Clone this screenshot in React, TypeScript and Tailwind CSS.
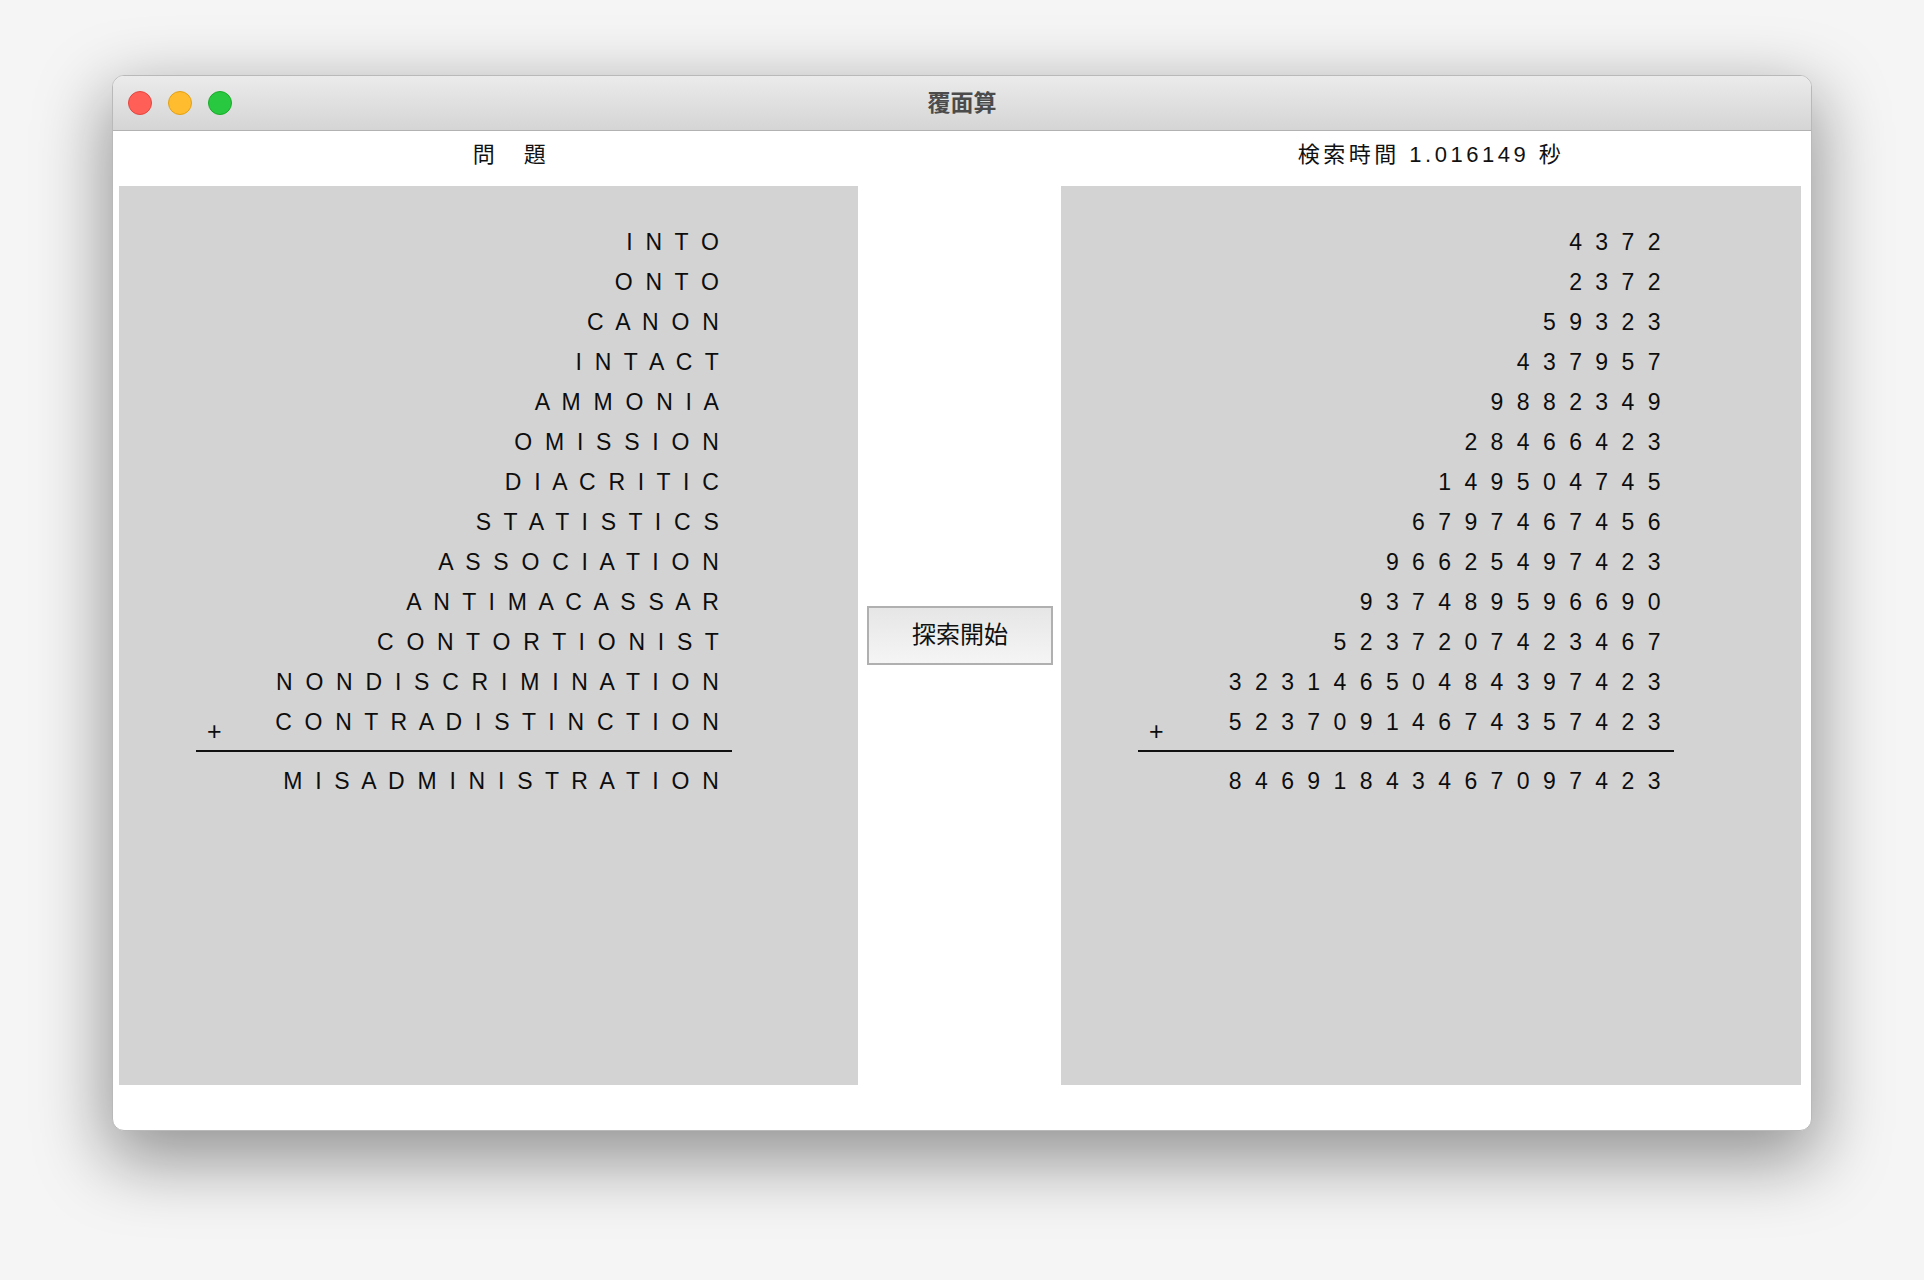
import React from "react";

const spaced = (s: string) => s.split("").join(" ");

const problem = [
  "INTO",
  "ONTO",
  "CANON",
  "INTACT",
  "AMMONIA",
  "OMISSION",
  "DIACRITIC",
  "STATISTICS",
  "ASSOCIATION",
  "ANTIMACASSAR",
  "CONTORTIONIST",
  "NONDISCRIMINATION",
  "CONTRADISTINCTION",
];
const problemResult = "MISADMINISTRATION";

const answer = [
  "4372",
  "2372",
  "59323",
  "437957",
  "9882349",
  "28466423",
  "149504745",
  "6797467456",
  "96625497423",
  "937489596690",
  "5237207423467",
  "32314650484397423",
  "52370914674357423",
];
const answerResult = "84691843467097423";

const FONT = { fontFamily: '"Liberation Sans", Arial, "Noto Sans CJK JP", sans-serif' };

function Sum({ rows, result, digits }: { rows: string[]; result: string; digits?: boolean }) {
  return (
    <div className="h-[899px] bg-[#d3d3d3] pt-[36px]">
      <div
        className={
          "ml-[77px] w-[536px] text-[23px] text-[#0d0d0d] " + (digits ? "tracking-[3.5px]" : "tracking-[3.2px]")
        }
      >
        {rows.map((r, i) =>
          i === rows.length - 1 ? (
            <div key={i} className="flex h-[40px] items-start justify-between pr-[10px] leading-[40px]">
              <span className="mt-[9px] pl-[11px] text-[25px]">+</span>
              <span>{spaced(r)}</span>
            </div>
          ) : (
            <div key={i} className="flex h-[40px] justify-end pr-[10px] leading-[40px]">
              {spaced(r)}
            </div>
          )
        )}
        <div className="mt-[8px] h-[2px] bg-[#111]" />
        <div className="mt-[9px] flex h-[40px] justify-end pr-[10px] leading-[40px]">{spaced(result)}</div>
      </div>
    </div>
  );
}

export default function App() {
  return (
    <div className="h-[1280px] w-[1924px] bg-[#f5f5f5] pl-[112px] pt-[75px]" style={FONT}>
      <div className="flex h-[1056px] w-[1700px] flex-col overflow-hidden rounded-[12px] border border-[#b9b9b9] bg-white shadow-[0_24px_70px_6px_rgba(0,0,0,0.4)]">
        {/* Title bar */}
        <div className="relative flex h-[55px] shrink-0 items-center border-b border-[#b2b2b2] bg-gradient-to-b from-[#ebebeb] to-[#d5d5d5] pl-[15px]">
          <div className="flex gap-[16px]">
            <div className="h-[24px] w-[24px] rounded-full border border-[#e2463f] bg-[#ff5f57]" />
            <div className="h-[24px] w-[24px] rounded-full border border-[#e1a116] bg-[#febc2e]" />
            <div className="h-[24px] w-[24px] rounded-full border border-[#1aab29] bg-[#28c840]" />
          </div>
          <div className="pointer-events-none absolute inset-0 flex items-center justify-center text-[23px] font-bold text-[#4b4b4b]">
            覆面算
          </div>
        </div>

        {/* Content */}
        <div className="flex flex-1 flex-col">
          <div className="flex h-[55px] text-[22px] tracking-[3.5px] text-[#111]">
            <div className="ml-[6px] w-[784px] pt-[10px] text-center leading-[28px]">問　題</div>
            <div className="ml-[158px] w-[740px] pt-[10px] text-center leading-[28px]">
              検索時間&nbsp;1.016149 秒
            </div>
          </div>

          <div className="flex pl-[6px]">
            <div className="w-[739px]">
              <Sum rows={problem} result={problemResult} />
            </div>
            <div className="flex w-[203px] items-center justify-center pl-[1px]">
              <button className="h-[59px] w-[186px] border-2 border-[#b0b0b0] bg-gradient-to-b from-[#e6e6e6] to-[#f5f5f5] pb-[2px] text-[24px] text-[#111]">
                探索開始
              </button>
            </div>
            <div className="w-[740px]">
              <Sum rows={answer} result={answerResult} digits />
            </div>
          </div>
        </div>
      </div>
    </div>
  );
}
